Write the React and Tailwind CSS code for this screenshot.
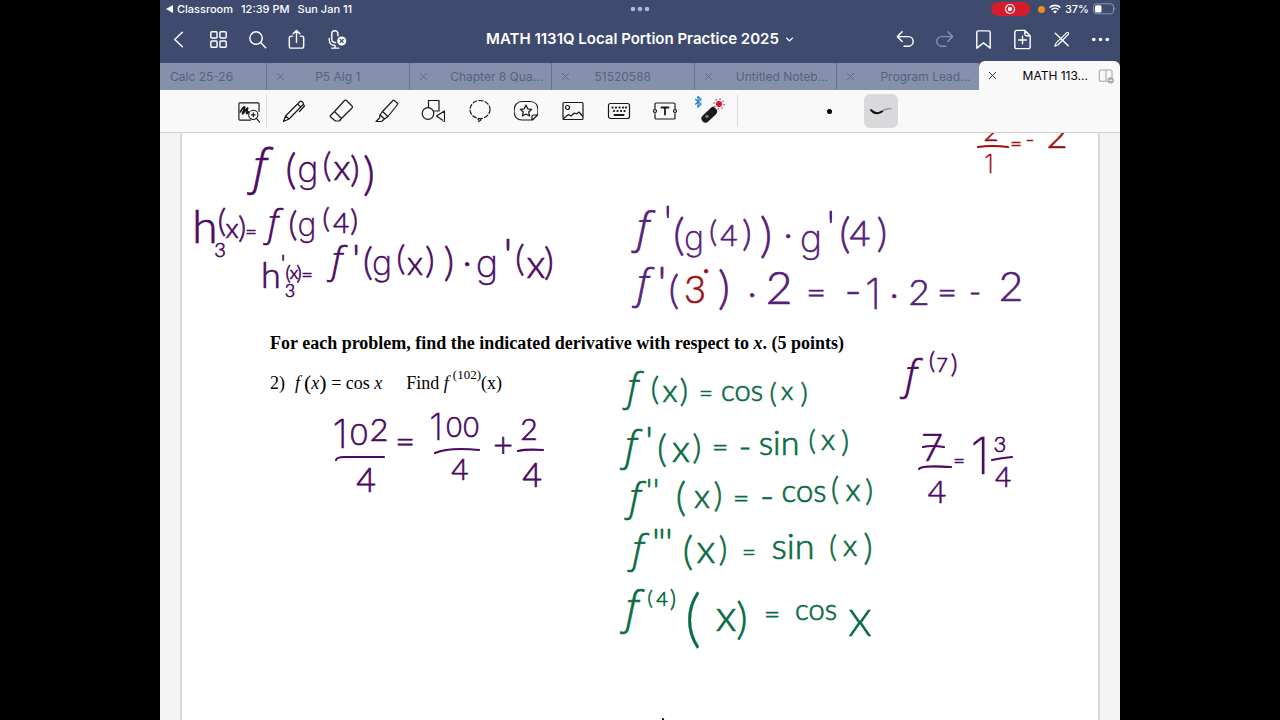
import React from "react";

const PURPLE = "#4b0a63";
const VIOLET = "#54207a";
const GREEN = "#0b6b43";
const RED = "#9c1010";

// Each mark is [text, centre x, baseline y, size, optional colour].
const notes = [
  { color: PURPLE, marks: [["f", 260, 184, 47], ["(", 291, 184, 42], ["g", 308, 182, 36], ["(", 327, 177, 33], ["x", 342, 180, 36], [")", 355, 182, 36], [")", 369, 190, 46]] },
  { color: PURPLE, marks: [["h", 205, 243, 46], ["3", 220, 257, 20], ["(", 222, 232, 32], ["x", 232, 238, 28], [")", 242, 238, 30], ["=", 251, 239, 20], ["f", 273, 236, 36], ["(", 293, 236, 34], ["g", 307, 236, 32], ["(", 326, 228, 28], ["4", 341, 233, 28], [")", 354, 231, 30]] },
  { color: PURPLE, marks: [["h", 271, 288, 36], ["'", 283, 272, 24], ["(", 288, 280, 20], ["x", 294, 279, 18], [")", 299, 280, 20], ["3", 290, 297, 18], ["=", 307, 282, 20], ["f", 337, 273, 37], ["'", 356, 274, 42], ["(", 368, 275, 38], ["g", 382, 275, 34], ["(", 401, 270, 34], ["x", 415, 275, 34], [")", 430, 273, 36], [")", 449, 276, 40], ["·", 467, 275, 36], ["g", 487, 277, 38], ["'", 508, 273, 48], ["(", 520, 271, 36], ["x", 536, 278, 40], [")", 549, 275, 38]] },
  { color: VIOLET, marks: [["f", 643, 243, 43], ["'", 668, 241, 50], ["(", 679, 250, 44], ["g", 694, 250, 34], ["(", 713, 242, 30], ["4", 729, 246, 30], [")", 747, 246, 36], [")", 766, 252, 48], ["·", 788, 247, 36], ["g", 811, 252, 38], ["'", 831, 246, 50], ["(", 845, 248, 42], ["4", 860, 246, 36], [")", 882, 247, 40]] },
  { color: VIOLET, marks: [["f", 643, 298, 40], ["'", 662, 301, 48], ["(", 674, 304, 40], ["3", 695, 303, 38, RED], ["·", 706, 282, 36, RED], [")", 724, 304, 46], ["·", 752, 306, 36], ["2", 779, 304, 46], ["=", 816, 304, 34], ["-", 853, 307, 46], ["1", 873, 309, 42], ["·", 894, 307, 36], ["2", 919, 305, 36], ["=", 947, 304, 34], ["-", 975, 304, 34], ["2", 1011, 301, 42]] },
  { color: RED, marks: [["2", 991, 141, 26], ["=", 1016, 151, 20], ["-", 1030, 148, 24], ["2", 1057, 148, 36], ["1", 989, 173, 25]] },
  { color: GREEN, marks: [["f", 633, 401, 38], ["(", 655, 400, 32], ["x", 670, 402, 32], [")", 684, 402, 32], ["=", 706, 402, 24], ["cos", 742, 401, 29], ["(", 773, 403, 28], ["x", 787, 400, 26], [")", 804, 403, 28]] },
  { color: GREEN, marks: [["f", 631, 460, 40], ["'", 649, 456, 42], ["(", 662, 462, 37], ["x", 681, 462, 38], [")", 697, 459, 34], ["=", 720, 457, 28], ["-", 745, 459, 34], ["sin", 779, 455, 34], ["(", 812, 450, 28], ["x", 828, 450, 30], [")", 845, 452, 30]] },
  { color: GREEN, marks: [["f", 635, 511, 39], ["'", 649, 503, 34], ["'", 656, 503, 34], ["(", 681, 511, 40], ["x", 702, 508, 34], [")", 718, 507, 33], ["=", 741, 508, 28], ["-", 767, 509, 38], ["cos", 804, 502, 31], ["(", 835, 500, 31], ["x", 853, 501, 32], [")", 869, 501, 30]] },
  { color: GREEN, marks: [["f", 638, 563, 39], ["'", 656, 557, 40], ["'", 662, 557, 40], ["'", 669, 557, 40], ["(", 688, 565, 40], ["x", 706, 563, 40], [")", 723, 561, 33], ["=", 749, 561, 24], ["sin", 793, 559, 36], ["(", 833, 557, 29], ["x", 850, 556, 30], [")", 868, 560, 35]] },
  { color: GREEN, marks: [["f", 632, 624, 44], ["(", 650, 605, 20], ["4", 662, 606, 20], [")", 673, 607, 23], ["(", 693, 640, 64], ["x", 726, 631, 44], [")", 742, 634, 44], ["=", 772, 624, 28], ["cos", 816, 620, 29], ["x", 860, 636, 52]] },
  { color: PURPLE, marks: [["f", 911, 389, 41], ["(", 932, 369, 23], ["7", 942, 372, 20], [")", 954, 373, 26]] },
  { color: PURPLE, marks: [["7", 932, 461, 38], ["4", 937, 503, 32], ["=", 959, 468, 20], ["1", 980, 474, 50], ["3", 1000, 452, 22], ["4", 1003, 487, 28]] },
  { color: PURPLE, marks: [["1", 340, 448, 40], ["0", 359, 445, 30], ["2", 379, 441, 32], ["4", 366, 492, 34], ["=", 405, 453, 34], ["1", 436, 440, 36], ["0", 454, 437, 27], ["0", 471, 437, 27], ["4", 460, 480, 30], ["+", 503, 457, 34], ["2", 529, 440, 30], ["4", 532, 487, 34]] },
];

const fractionBars = [
  { color: RED, d: "M978 147 q14 -2 30 0" },
  { color: PURPLE, d: "M336 460 q1 -3 8 -3 h40" },
  { color: PURPLE, d: "M435 453 q14 -6 44 -3" },
  { color: PURPLE, d: "M518 451 q8 -2 25 -1" },
  { color: PURPLE, d: "M919 469 q2 -4 32 -2" },
  { color: PURPLE, d: "M923 447 q8 -2 21 0" },
  { color: PURPLE, d: "M992 460 q9 -2 20 -3" },
  { color: "#111111", d: "M663 719 v1" },
];

function face(t) {
  if (t === "f") return "font-['Open_Sans',sans-serif] font-light italic";
  if (t === "g" || t === "1") return "font-['Inter',sans-serif] font-extralight";
  return "font-['Lato',sans-serif] font-light";
}

function penWidth(t, size) {
  if (size > 48) return 0.3;
  if (t === "g" || t === "1") return 0.4;
  return 0.7;
}

function Ink() {
  return (
    <svg viewBox="182 133 916 587" className="pointer-events-none absolute top-0 left-0 w-full">
      {notes.map((note, i) => (
        <text key={i} textAnchor="middle">
          {note.marks.map(([t, x, y, size, color], j) => (
            <tspan
              key={j}
              x={x}
              y={y}
              fontSize={size}
              fill={color || note.color}
              stroke={color || note.color}
              strokeWidth={penWidth(t, size)}
              className={face(t)}
            >
              {t}
            </tspan>
          ))}
        </text>
      ))}
      {fractionBars.map((bar) => (
        <path key={bar.d} d={bar.d} fill="none" stroke={bar.color} strokeWidth="2.2" strokeLinecap="round" />
      ))}
    </svg>
  );
}

function Icon({ size = 24, width = 1.5, className = "", children }) {
  return (
    <svg width={size} height={size} viewBox="0 0 24 24" fill="none" stroke="currentColor" strokeWidth={width} strokeLinecap="round" strokeLinejoin="round" className={className}>
      {children}
    </svg>
  );
}

const leftNav = [
  { name: "Back", icon: <path d="M15 4.500 7 12l8 7.500" /> },
  { name: "Pages", icon: <><rect x="4" y="4" width="6.500" height="6.500" rx="1" /><rect x="13.500" y="4" width="6.500" height="6.500" rx="1" /><rect x="4" y="13.500" width="6.500" height="6.500" rx="1" /><rect x="13.500" y="13.500" width="6.500" height="6.500" rx="1" /></> },
  { name: "Search", icon: <><circle cx="10.500" cy="10.500" r="6.500" /><path d="m15.500 15.500 5 5" /></> },
  { name: "Share", icon: <><path d="M8 8.500H6.500a2 2 0 0 0-2 2v8.500a2 2 0 0 0 2 2h11a2 2 0 0 0 2-2v-8.500a2 2 0 0 0-2-2H16M12 15V2.500M8.500 6 12 2.500 15.500 6" /></> },
  { name: "Record", icon: <><path d="M14.500 8V6a3.200 3.200 0 0 0-6.400 0v6a3.200 3.200 0 0 0 4 3.100M5.500 11v1.500c0 3.500 2.500 5.800 6 5.800M11.500 18.300v2.700M8 21h7.500" /><circle cx="18.500" cy="13.500" r="4" fill="currentColor" /><path d="m17 12 3 3m0-3-3 3" stroke="#3e4a6e" strokeWidth="1.400" /></> },
];

const rightNav = [
  { name: "Undo", icon: <path d="M8.500 4 3.500 9l5 5M4 9h11a5 5 0 0 1 0 10h-4.500" /> },
  { name: "Redo", dim: true, icon: <path d="m15.500 4 5 5-5 5M20 9H9a5 5 0 0 0 0 10h4.500" /> },
  { name: "Bookmark", icon: <path d="M5 4.500a1.500 1.500 0 0 1 1.500-1.500h11a1.500 1.500 0 0 1 1.500 1.500v16.500L12 15.500 5 21z" /> },
  { name: "Add page", icon: <><path d="M14.500 2.500H6a2 2 0 0 0-2 2v15a2 2 0 0 0 2 2h12a2 2 0 0 0 2-2V8zM14.500 2.500V6.500a1.500 1.500 0 0 0 1.500 1.500h4M12 8.500v8M8 12.500h8" /></> },
  { name: "Read only", icon: <><path d="m5.500 5.500 13.500 13" /><path d="m5 19 1.500-3.500L17.500 4.800c1-.8 2.500.7 1.700 1.700L8.500 17.500z" strokeWidth="1.200" /></> },
  { name: "More", icon: <g fill="currentColor" stroke="none"><circle cx="5" cy="12" r="1.900" /><circle cx="12" cy="12" r="1.900" /><circle cx="19" cy="12" r="1.900" /></g> },
];

const tabs = [
  { name: "P5 Alg 1" },
  { name: "Chapter 8 Qua...", long: true },
  { name: "51520588" },
  { name: "Untitled Noteb...", long: true },
  { name: "Program Lead...", long: true },
];

const tools = [
  { name: "Pen", icon: <path d="m1.500 22.500 2-5.500L18 2.500c1.200-1.200 4.300 1.600 3.200 3L7 20zM3.500 17 7 20M15.500 5l3.300 3M21.500 5.500 22.500 7l-5 5.500" /> },
  { name: "Eraser", icon: <path d="m1.500 16.500 4-4L15.500 1.500a1.300 1.300 0 0 1 2 0L23 7a1.300 1.300 0 0 1 0 2L12.500 19.500 10.300 22H6.500L1.500 18a1 1 0 0 1 0-1.500zM5.500 12.500l7 7" /> },
  { name: "Highlighter", icon: <path d="M7.500 12.500 18 1.500a1 1 0 0 1 1.300 0l3.200 2.700a1 1 0 0 1 .1 1.300L13 17.500zM7.500 12.500 5 15.800 9.500 20l3.500-2.500M5 15.800l-.5 3.200L1 22.500h5.500L9.500 20" /> },
  { name: "Shapes", icon: <><path d="M7.500 8V1.500H18V12h-5.500M15.500 17 23.500 12v10.500z" /><circle cx="7" cy="14.500" r="5.800" /></> },
  { name: "Lasso", icon: <><ellipse cx="12" cy="10.500" rx="10" ry="9" strokeDasharray="4 2.200" /><path d="M10 20.500c1-1.200 3.500-1 2.800.4s-2.800.6-2 1.800" /></> },
  { name: "Elements", icon: <><path d="M8 2.500h8c5 0 8 3.500 8 8.500 0 2.500-.2 4-.5 5l-5 5H8c-5 0-8-3.500-8-9s3-9.500 8-9.500zM23.500 16h-4a1.500 1.500 0 0 0-1.500 1.500V21" /><path d="m12 6 1.700 3.800 4 .5-3 2.700.9 4-3.600-2-3.600 2 .9-4-3-2.700 4-.5z" /></> },
  { name: "Image", icon: <><rect x="2" y="3.500" width="20" height="17" rx="1" /><circle cx="6.500" cy="8.500" r="2" /><path d="m2.500 19.500 5-4 2.500 1.500 3.500-3 2 1 2.500-2 3.500 4" /></> },
  { name: "Keyboard", icon: <><rect x="1.500" y="4.500" width="21" height="15" rx="2" /><path d="M5.500 8.500h.1M9 8.500h.1M12.500 8.500h.1M16 8.500h.1M19 8.500h.1M7 12h.1M10.500 12h.1M14 12h.1M17.500 12h.1" strokeWidth="2.200" /><path d="M7.500 16h9" strokeWidth="2" /></> },
  { name: "Text", icon: <><path d="M2 9.500V5a1 1 0 0 1 1-1h18a1 1 0 0 1 1 1v4.500M2 14.500V19a1 1 0 0 0 1 1h18a1 1 0 0 0 1-1v-4.500" /><circle cx="2" cy="12" r="1.500" /><circle cx="22" cy="12" r="1.500" /><path d="M8.500 8.500h7M12 8.500V15.500" strokeWidth="1.800" /></> },
];

function Close({ label }) {
  return (
    <button aria-label={label} className="absolute left-2 flex size-3">
      <Icon size={11} width={1.7}><path d="m5 5 14 14M19 5 5 19" /></Icon>
    </button>
  );
}

export default function App() {
  return (
    <div className="h-screen overflow-hidden bg-black font-['Inter',sans-serif]">
      <div className="mx-auto flex h-full w-full max-w-[960px] flex-col bg-[#f4f4f5]">
        <header className="bg-[#3e4a6e] text-white">
          <div className="grid h-[18px] grid-cols-[1fr_auto_1fr] items-center text-[11px] font-medium">
            <div className="flex items-center gap-2 pl-1.5">
              <span className="flex items-center gap-1">
                <svg width="7" height="8" viewBox="0 0 7 8" fill="currentColor"><path d="M7 0v8L0 4z" /></svg>
                Classroom
              </span>
              <span>12:39 PM</span>
              <span>Sun Jan 11</span>
            </div>
            <svg width="20" height="6" viewBox="0 0 20 6" fill="#a9b8dc"><circle cx="3" cy="3" r="2.300" /><circle cx="10" cy="3" r="2.300" /><circle cx="17" cy="3" r="2.300" /></svg>
            <div className="flex items-center justify-end pr-1">
              <span className="mr-2 flex h-[14px] w-[39px] items-center justify-center rounded-full bg-[#d41c2c]">
                <svg width="12" height="12" viewBox="0 0 12 12"><circle cx="6" cy="6" r="4.500" fill="none" stroke="white" strokeWidth="1.200" /><circle cx="6" cy="6" r="2.200" fill="white" /></svg>
              </span>
              <span className="mr-1 size-[7px] rounded-full bg-[#ee8f1f]" />
              <svg width="12" height="10" viewBox="0 0 12 10" fill="none" stroke="white" strokeWidth="1.600" className="mr-1"><path d="M.7 3.500a7.600 7.600 0 0 1 10.600 0M2.600 5.600a4.900 4.900 0 0 1 6.800 0" /><path d="m6 9.500-2-2a3 3 0 0 1 4 0z" fill="white" stroke="none" /></svg>
              <span className="mr-1">37%</span>
              <svg width="23" height="12" viewBox="0 0 23 12"><rect x=".5" y=".8" width="20" height="10" rx="3" fill="none" stroke="#8b95b3" strokeWidth="1" /><rect x="2" y="2.200" width="6.500" height="7.400" rx="1.500" fill="white" /><path d="M21.600 4q1.500 2 0 4z" fill="#8b95b3" /></svg>
            </div>
          </div>
          <nav className="grid h-[43px] grid-cols-[1fr_auto_1fr] items-center">
            <div className="flex">
              {leftNav.map((n) => (
                <button key={n.name} aria-label={n.name} className="flex h-10 w-[39px] items-center justify-center">
                  <Icon size={23}>{n.icon}</Icon>
                </button>
              ))}
            </div>
            <button className="flex items-center gap-1.5 text-[15px] font-semibold whitespace-nowrap">
              MATH 1131Q Local Portion Practice 2025
              <Icon size={9} width={3}><path d="m4 8 8 8 8-8" /></Icon>
            </button>
            <div className="flex justify-end">
              {rightNav.map((n) => (
                <button key={n.name} aria-label={n.name} className={n.dim ? "flex h-10 w-[39px] items-center justify-center text-[#8491b4]" : "flex h-10 w-[39px] items-center justify-center"}>
                  <Icon size={23}>{n.icon}</Icon>
                </button>
              ))}
            </div>
          </nav>
          <div className="flex h-[29px] items-end text-[12px] text-[#56617e]">
            <a href="#calc" className="flex h-[27px] w-[106px] items-center bg-[#8591ac] pl-2.5">Calc 25-26</a>
            {tabs.map((t) => (
              <div key={t.name} className="relative flex h-[27px] flex-1 items-center border-l border-[#64718f] bg-[#8591ac]">
                <Close label={"Close " + t.name} />
                <a href="#tab" className={t.long ? "w-full pr-2 text-right" : "w-full text-center"}>{t.name}</a>
              </div>
            ))}
            <div className="relative flex h-[29px] flex-1 items-center justify-end gap-2.5 rounded-t-md bg-[#f9f9f9] text-black">
              <Close label="Close MATH 113..." />
              <a href="#tab">MATH 113...</a>
              <button aria-label="Split view" className="mr-1.5 text-[#a5a5a8]">
                <Icon size={16} width={1.6}><path d="M13 20H4a2 2 0 0 1-2-2V5a2 2 0 0 1 2-2h15a2 2 0 0 1 2 2v9M12 3v17" /><circle cx="19" cy="18.500" r="4" fill="currentColor" /><path d="M17 18.500h4" stroke="white" /></Icon>
              </button>
            </div>
          </div>
        </header>

        <div className="flex h-[43px] shrink-0 items-center border-b border-[#d2d2d4] bg-[#f9f9f9] pl-[70px] text-[#18181a]">
          <button aria-label="Zoom window" className="flex h-8 w-[37px] items-center justify-center border-r border-[#dcdcde]">
            <Icon size={23} width={1.2}>
              <path d="M14 21H3a1 1 0 0 1-1-1V4a1 1 0 0 1 1-1h19a1 1 0 0 1 1 1v8" />
              <path d="M3.500 12.500C5 9 7.500 6.500 8 7.500S5 14 5.800 14.500 10 8 11 8.500s-2 5-1 5.500 1.500-1 2-1.500" strokeWidth="1.800" />
              <circle cx="17" cy="15.500" r="4.800" fill="#f9f9f9" /><path d="m20.500 19.500 3 3.500M15 15.500h4M17 13.500v4" />
            </Icon>
          </button>
          <div className="ml-1 grid w-[464px] grid-cols-10">
            {tools.map((t) => (
              <button key={t.name} aria-label={t.name} className="flex h-9 items-center justify-center">
                <Icon size={24} width={1.2}>{t.icon}</Icon>
              </button>
            ))}
            <button aria-label="Laser pointer" className="flex h-9 items-center justify-center">
              <svg width="34" height="30" viewBox="0 0 34 30">
                <path d="m0 3 6 5L3 11V.5L6 3.500 0 8.500" fill="none" stroke="#1a84d2" strokeWidth="1.300" />
                <path d="m10.500 22.500 7.500-7" stroke="#1b1b1d" strokeWidth="8" strokeLinecap="round" />
                <path d="m17 15 3-2.500" stroke="#1b1b1d" strokeWidth="6" />
                <circle cx="12" cy="20.500" r="1.800" fill="#77777c" />
                <circle cx="24" cy="8" r="3" fill="#cf1739" />
                <circle cx="24" cy="8" r="5" fill="none" stroke="#e2455f" strokeWidth="1.600" strokeDasharray="1.300 2.600" />
              </svg>
            </button>
          </div>
          <div className="ml-0.5 h-8 w-px bg-[#dcdcde]" />
          <button aria-label="Dot stroke" className="ml-[74px] flex size-[34px] items-center justify-center"><span className="size-[5px] rounded-full bg-black" /></button>
          <button aria-label="Brush stroke" className="ml-[18px] flex size-[34px] items-center justify-center rounded-md bg-[#d9d9db]">
            <svg width="24" height="12" viewBox="0 0 24 12" fill="none" strokeLinecap="round"><path d="M12 7c3-2 6-4.500 10-3" stroke="#8b8b8d" strokeWidth="1.300" /><path d="M2 5c3 3.500 7 4 11 1.500" stroke="#111" strokeWidth="2" /></svg>
          </button>
        </div>

        <main className="min-h-0 flex-1 overflow-hidden px-5">
          <article className="relative h-full border-x-2 border-[#d9d9db] bg-white pt-[200px] pl-[88px] font-['Liberation_Serif',serif] text-[18px] leading-5 text-black">
            <h1 className="font-bold">
              For each problem, find the indicated derivative with respect to <i>x</i>. (5 points)
            </h1>
            <p className="mt-5 flex items-center whitespace-pre">
              <span className="mr-2.5">2)</span>
              <span className="flex items-center"><i className="mr-1">f</i><span className="text-[22px]">(</span><i>x</i><span className="text-[22px]">)</span> = cos <i>x</i></span>
              <span className="ml-6 flex items-center">Find <i>f</i><sup className="mb-1 ml-1 text-[13px]">(102)</sup>(x)</span>
            </p>
            <Ink />
          </article>
        </main>
      </div>
    </div>
  );
}
